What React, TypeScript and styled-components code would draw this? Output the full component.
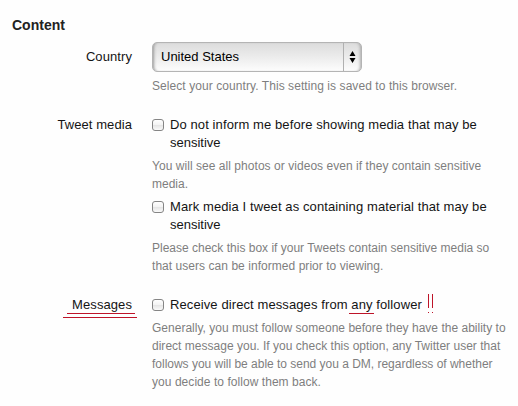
import React from 'react';
import styled, { createGlobalStyle } from 'styled-components';

const GlobalStyle = createGlobalStyle`
  body {
    margin: 0;
    background: #fefefe;
    font-family: 'Liberation Sans', Arial, sans-serif;
    font-size: 13px;
    line-height: 18px;
    color: #141414;
  }
`;

const Page = styled.main`
  box-sizing: border-box;
  width: 518px;
  height: 406px;
  padding: 16px 0 0 12px;
  overflow: hidden;
`;

const Heading = styled.h2`
  margin: 0 0 8px;
  font-size: 14px;
  line-height: 18px;
  font-weight: bold;
  color: #222;
`;

const Field = styled.section<{ $gap: number }>`
  display: grid;
  grid-template-columns: 120px 360px;
  column-gap: 20px;
  margin-bottom: ${(p) => p.$gap}px;
`;

const Label = styled.div<{ $top?: number }>`
  position: relative;
  padding-top: ${(p) => p.$top ?? 0}px;
  text-align: right;
  letter-spacing: 0.08px;
`;

const Select = styled.button`
  display: flex;
  box-sizing: border-box;
  width: 210px;
  height: 30px;
  padding: 0;
  border: 1px solid #b4b4b4;
  border-radius: 5px;
  background: linear-gradient(#dcdcdc, #ececec 50%, #fdfdfd);
  box-shadow: inset 3px 0 3px -2px #999, inset -3px 0 3px -2px #aaa;
  font: inherit;
  color: #000;
  text-align: left;
`;

const SelectValue = styled.span`
  flex: 1;
  padding-left: 8px;
  line-height: 28px;
`;

const SelectArrows = styled.span`
  display: flex;
  width: 17px;
  border-left: 1px solid #b0b0b0;
  align-items: center;
  justify-content: center;
`;

const Help = styled.p`
  margin: 5px 0 0;
  font-size: 12px;
  color: #7e7e7e;
`;

const Line = styled.span<{ $spacing?: number }>`
  display: block;
  white-space: nowrap;
  letter-spacing: ${(p) => p.$spacing ?? 0}px;
`;

const Option = styled.label<{ $top?: number }>`
  display: grid;
  grid-template-columns: 12px 1fr;
  column-gap: 6px;
  margin-top: ${(p) => p.$top ?? 0}px;
`;

const Checkbox = styled.input.attrs({ type: 'checkbox' })`
  appearance: none;
  box-sizing: border-box;
  width: 12px;
  height: 12px;
  margin: 3px 0 0;
  border: 1px solid #858585;
  border-radius: 3px;
  background: linear-gradient(#fff, #f4f4f4 45%, #e4e4e4 50%, #fafafa);
`;

const OptionText = styled.span`
  position: relative;
`;

const Marks = styled.svg<{ $left: number; $top: number }>`
  position: absolute;
  left: ${(p) => p.$left}px;
  top: ${(p) => p.$top}px;
  fill: #be1429;
  pointer-events: none;
`;

export default function App() {
  return (
    <>
      <GlobalStyle />
      <Page>
        <Heading>Content</Heading>

        <Field $gap={21}>
          <Label $top={6}>Country</Label>
          <div>
            <Select type="button">
              <SelectValue>United States</SelectValue>
              <SelectArrows>
                <svg width="7" height="12" viewBox="0 0 7 12" fill="#000">
                  <path d="M3.5 0 6.5 5h-6zM3.5 12 .5 7h6z" />
                </svg>
              </SelectArrows>
            </Select>
            <Help>
              <Line $spacing={0.07}>Select your country. This setting is saved to this browser.</Line>
            </Help>
          </div>
        </Field>

        <Field $gap={21}>
          <Label>Tweet media</Label>
          <div>
            <Option>
              <Checkbox />
              <OptionText>
                <Line $spacing={0.1}>Do not inform me before showing media that may be</Line>
                <Line>sensitive</Line>
              </OptionText>
            </Option>
            <Help>
              <Line $spacing={0.045}>You will see all photos or videos even if they contain sensitive</Line>
              <Line>media.</Line>
            </Help>
            <Option $top={5}>
              <Checkbox />
              <OptionText>
                <Line $spacing={0.1}>Mark media I tweet as containing material that may be</Line>
                <Line>sensitive</Line>
              </OptionText>
            </Option>
            <Help>
              <Line>Please check this box if your Tweets contain sensitive media so</Line>
              <Line $spacing={0.045}>that users can be informed prior to viewing.</Line>
            </Help>
          </div>
        </Field>

        <Field $gap={0}>
          <Label>
            Messages
            <Marks $left={51} $top={17} width="74" height="5" viewBox="0 0 74 5">
              <path d="M4 0h68v1H4zM0 4h74v1H0z" />
            </Marks>
          </Label>
          <div>
            <Option>
              <Checkbox />
              <OptionText>
                <Line $spacing={0.1}>Receive direct messages from any follower</Line>
                <Marks $left={179} $top={17} width="25" height="1" viewBox="0 0 25 1">
                  <path d="M0 0h25v1H0z" />
                </Marks>
                <Marks $left={258} $top={-2} width="5" height="19" viewBox="0 0 5 19">
                  <path d="M0 0h1v14H0zM4 0h1v14H4zM0 18h1v1H0zM4 18h1v1H4z" />
                </Marks>
              </OptionText>
            </Option>
            <Help>
              <Line $spacing={0.015}>Generally, you must follow someone before they have the ability to</Line>
              <Line $spacing={0.015}>direct message you. If you check this option, any Twitter user that</Line>
              <Line $spacing={-0.015}>follows you will be able to send you a DM, regardless of whether</Line>
              <Line $spacing={0.05}>you decide to follow them back.</Line>
            </Help>
          </div>
        </Field>
      </Page>
    </>
  );
}
